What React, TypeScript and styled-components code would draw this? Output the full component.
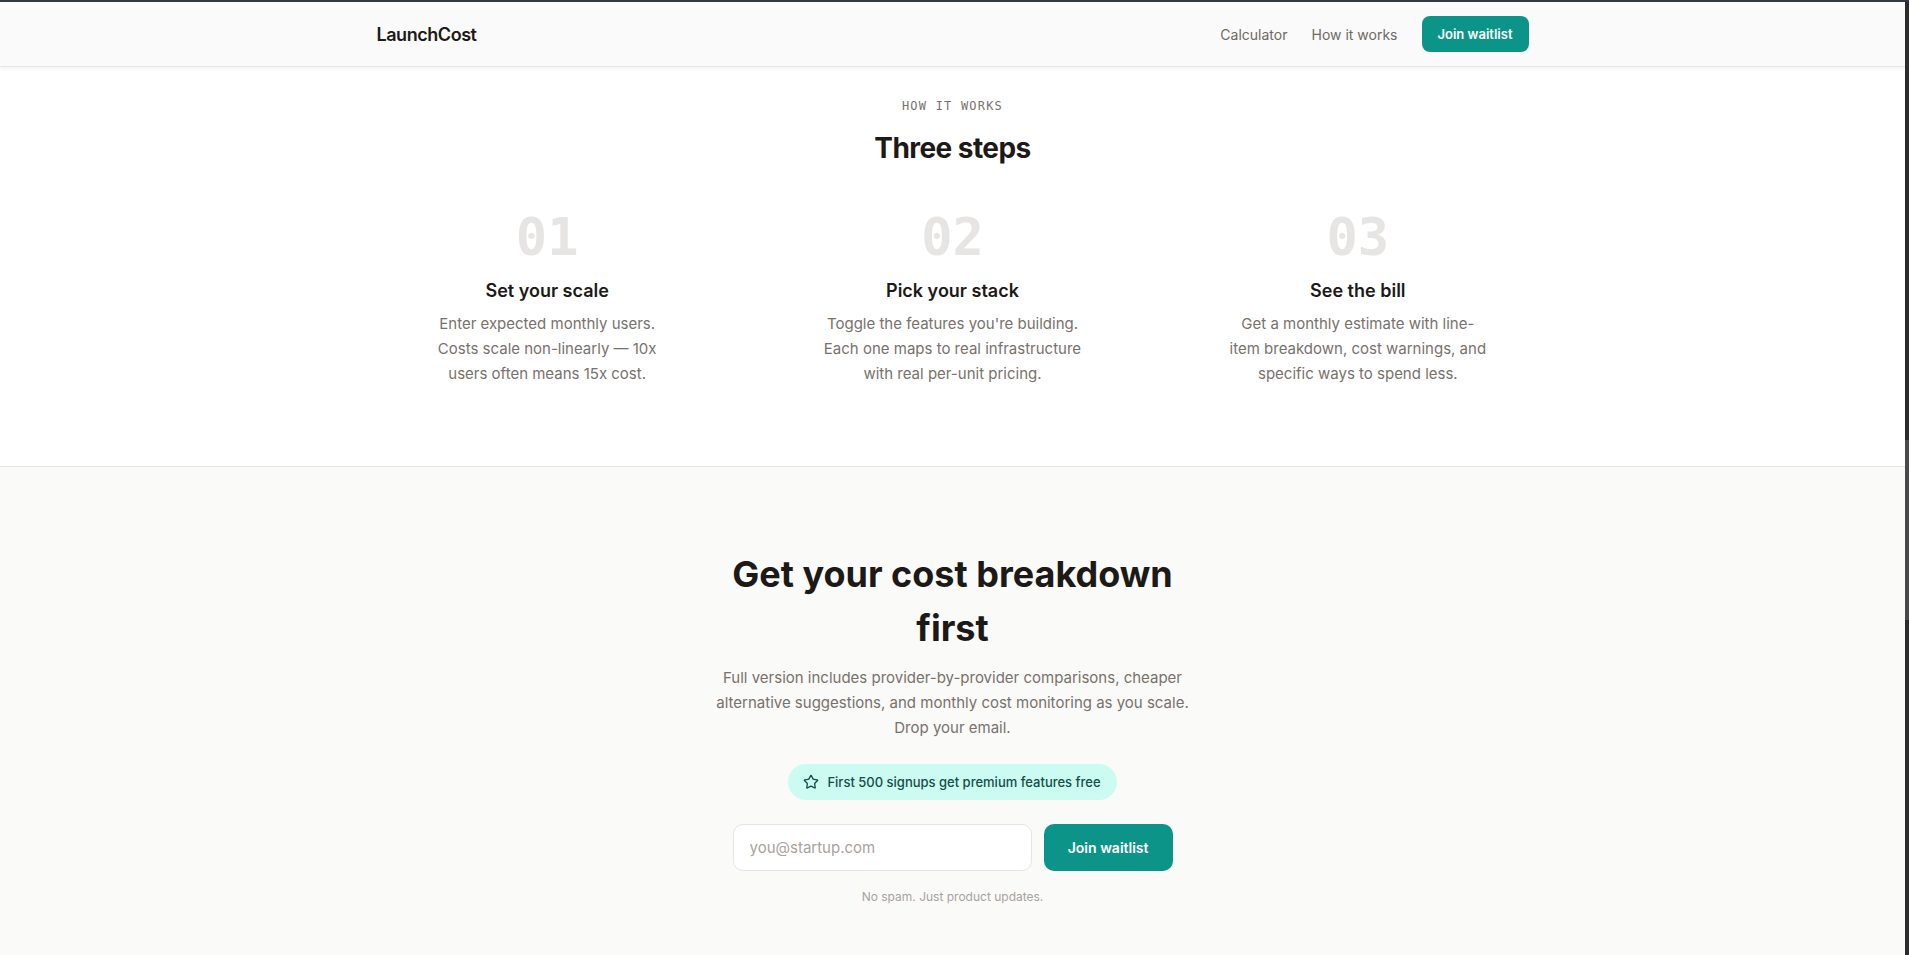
import React from "react";
import styled, { createGlobalStyle } from "styled-components";

const GlobalStyle = createGlobalStyle`
  html, body {
    margin: 0;
    padding: 0;
    overflow: hidden;
    background: #ffffff;
  }
  body {
    font-family: Inter, "Noto Sans", "Liberation Sans", sans-serif;
    color: #1c1917;
    -webkit-font-smoothing: antialiased;
  }
  * { box-sizing: border-box; }
`;

const Frame = styled.div`
  display: flex;
  height: 100vh;
  border-top: 2px solid #313743;
  overflow: hidden;
`;

const Page = styled.div`
  flex: 1;
  min-width: 0;
  display: flex;
  flex-direction: column;
  overflow: hidden;
`;

const ScrollTrack = styled.div`
  width: 4px;
  flex-shrink: 0;
  background: #2b2b2b;
  display: flex;
  flex-direction: column;
  padding-top: 438px;
`;

const ScrollThumb = styled.div`
  height: 180px;
  background: #4a4a4a;
`;

const Header = styled.header`
  height: 65px;
  flex-shrink: 0;
  background: #fafafa;
  border-bottom: 1px solid #e7e7e7;
  box-shadow: 0 2px 4px rgba(0, 0, 0, 0.05);
  position: relative;
  z-index: 2;
`;

const Container = styled.div<{ $width?: number }>`
  max-width: ${(p) => p.$width ?? 1152}px;
  margin: 0 auto;
  width: 100%;
`;

const HeaderInner = styled(Container)`
  height: 100%;
  display: flex;
  align-items: center;
  justify-content: space-between;
`;

const Logo = styled.div`
  font-size: 18px;
  font-weight: 600;
  letter-spacing: -0.025em;
  color: #1c1917;
`;

const Nav = styled.nav`
  display: flex;
  align-items: center;
  gap: 24px;
`;

const NavLink = styled.a`
  font-size: 14px;
  color: #6f6963;
  text-decoration: none;
`;

const Button = styled.button<{ $size?: "sm" | "lg" }>`
  border: none;
  background: #0d9488;
  color: #ffffff;
  font-family: inherit;
  font-weight: 600;
  cursor: pointer;
  font-size: ${(p) => (p.$size === "lg" ? 14 : 13)}px;
  height: ${(p) => (p.$size === "lg" ? 47 : 36)}px;
  padding: 0 ${(p) => (p.$size === "lg" ? 24 : 16)}px;
  border-radius: ${(p) => (p.$size === "lg" ? 10 : 8)}px;
  white-space: nowrap;
`;

const StepsSection = styled.section`
  background: #ffffff;
  padding: 31px 0 80px;
  border-bottom: 1px solid #e7e5e4;
  flex-shrink: 0;
`;

const Eyebrow = styled.div`
  text-align: center;
  font-family: "DejaVu Sans Mono", "Liberation Mono", monospace;
  font-size: 12px;
  line-height: 16px;
  letter-spacing: 0.1em;
  color: #78716c;
  text-transform: uppercase;
`;

const SectionTitle = styled.h2`
  margin: 16px 0 0;
  text-align: center;
  font-size: 28px;
  line-height: 36px;
  font-weight: 700;
  letter-spacing: -0.02em;
  color: #1c1917;
`;

const StepGrid = styled(Container)`
  display: grid;
  grid-template-columns: repeat(3, 1fr);
  gap: 64px;
  margin-top: 45px;
`;

const Step = styled.div`
  display: flex;
  flex-direction: column;
  align-items: center;
  text-align: center;
`;

const StepNumber = styled.div`
  font-family: "DejaVu Sans Mono", "Liberation Mono", monospace;
  font-size: 52px;
  line-height: 52px;
  font-weight: 700;
  color: #e7e5e4;
`;

const StepTitle = styled.h3`
  margin: 14px 0 0;
  font-size: 18px;
  line-height: 28px;
  font-weight: 600;
  color: #1c1917;
`;

const StepText = styled.p`
  margin: 6px 0 0;
  max-width: 260px;
  font-size: 15px;
  line-height: 25px;
  color: #78716c;
`;

const CtaSection = styled.section`
  flex: 1;
  background: #fafaf9;
  padding: 80px 0;
`;

const CtaInner = styled(Container)`
  display: flex;
  flex-direction: column;
  align-items: center;
  text-align: center;
`;

const CtaTitle = styled.h2`
  margin: 0;
  font-size: 36px;
  line-height: 54px;
  font-weight: 700;
  color: #1c1917;
`;

const CtaText = styled.p`
  margin: 10px 0 0;
  font-size: 15px;
  line-height: 25px;
  color: #78716c;
`;

const Badge = styled.div`
  margin-top: 24px;
  height: 36px;
  display: inline-flex;
  align-items: center;
  gap: 8px;
  padding: 0 16px 0 15px;
  border-radius: 999px;
  background: #ccfbf1;
  color: #134e4a;
  font-size: 13px;
  font-weight: 500;
`;

const Form = styled.form`
  margin-top: 24px;
  width: 440px;
  display: flex;
  gap: 12px;
`;

const EmailInput = styled.input`
  flex: 1;
  min-width: 0;
  height: 47px;
  border: 1px solid #e7e5e4;
  border-radius: 10px;
  background: #ffffff;
  padding: 0 16px;
  font-family: inherit;
  font-size: 15px;
  color: #1c1917;
  outline: none;
  &::placeholder {
    color: #a8a29e;
  }
`;

const Note = styled.p`
  margin: 16px 0 0;
  font-size: 12px;
  line-height: 20px;
  color: #a8a29e;
`;

const StarIcon = () => (
  <svg width="16" height="16" viewBox="0 0 24 24" fill="none" stroke="currentColor" strokeWidth="2" strokeLinecap="round" strokeLinejoin="round">
    <path d="M11.525 2.295a.53.53 0 0 1 .95 0l2.31 4.679a2.123 2.123 0 0 0 1.595 1.16l5.166.756a.53.53 0 0 1 .294.904l-3.736 3.638a2.123 2.123 0 0 0-.611 1.878l.882 5.14a.53.53 0 0 1-.771.56l-4.618-2.428a2.122 2.122 0 0 0-1.973 0L6.396 21.01a.53.53 0 0 1-.77-.56l.881-5.139a2.122 2.122 0 0 0-.611-1.879L2.16 9.795a.53.53 0 0 1 .294-.906l5.165-.755a2.122 2.122 0 0 0 1.597-1.16z" />
  </svg>
);

const steps = [
  {
    n: "01",
    title: "Set your scale",
    text: "Enter expected monthly users. Costs scale non-linearly — 10x users often means 15x cost.",
  },
  {
    n: "02",
    title: "Pick your stack",
    text: "Toggle the features you're building. Each one maps to real infrastructure with real per-unit pricing.",
  },
  {
    n: "03",
    title: "See the bill",
    text: "Get a monthly estimate with line-item breakdown, cost warnings, and specific ways to spend less.",
  },
];

export default function App() {
  return (
    <>
      <GlobalStyle />
      <Frame>
        <Page>
          <Header>
            <HeaderInner>
              <Logo>LaunchCost</Logo>
              <Nav>
                <NavLink href="#calculator">Calculator</NavLink>
                <NavLink href="#how">How it works</NavLink>
                <Button type="button">Join waitlist</Button>
              </Nav>
            </HeaderInner>
          </Header>

          <StepsSection id="how">
            <Eyebrow>How it works</Eyebrow>
            <SectionTitle>Three steps</SectionTitle>
            <StepGrid>
              {steps.map((s) => (
                <Step key={s.n}>
                  <StepNumber>{s.n}</StepNumber>
                  <StepTitle>{s.title}</StepTitle>
                  <StepText>{s.text}</StepText>
                </Step>
              ))}
            </StepGrid>
          </StepsSection>

          <CtaSection>
            <CtaInner $width={480}>
              <CtaTitle>Get your cost breakdown first</CtaTitle>
              <CtaText>
                Full version includes provider-by-provider comparisons, cheaper alternative
                suggestions, and monthly cost monitoring as you scale. Drop your email.
              </CtaText>
              <Badge>
                <StarIcon />
                First 500 signups get premium features free
              </Badge>
              <Form onSubmit={(e) => e.preventDefault()}>
                <EmailInput type="email" placeholder="you@startup.com" />
                <Button type="submit" $size="lg">Join waitlist</Button>
              </Form>
              <Note>No spam. Just product updates.</Note>
            </CtaInner>
          </CtaSection>
        </Page>
        <ScrollTrack>
          <ScrollThumb />
        </ScrollTrack>
      </Frame>
    </>
  );
}
